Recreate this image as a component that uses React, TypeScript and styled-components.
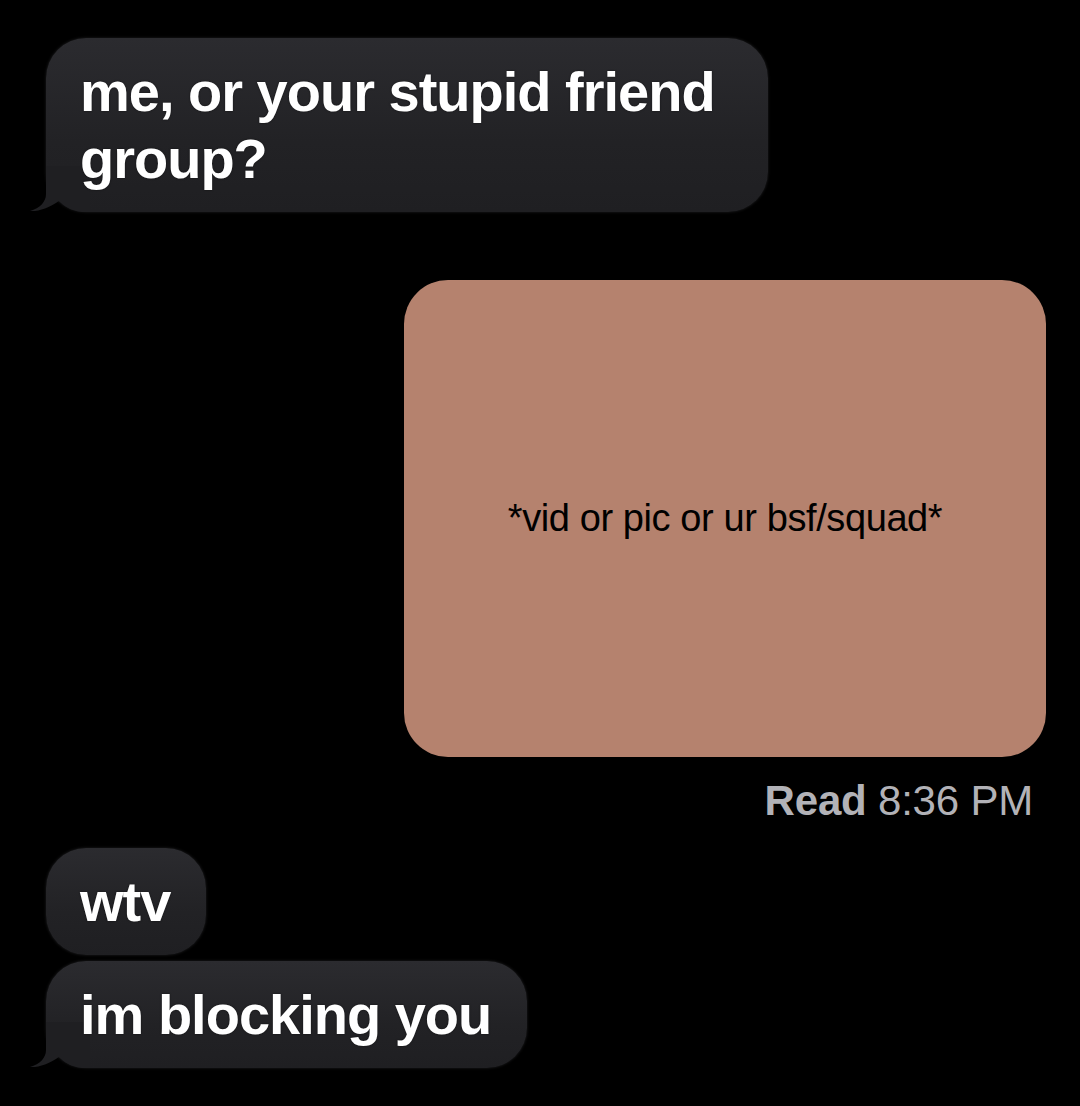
import styled, { createGlobalStyle } from "styled-components";

const GlobalStyle = createGlobalStyle`
  html, body {
    margin: 0;
    padding: 0;
    background: #000;
  }
  body {
    font-family: "Liberation Sans", Arial, sans-serif;
    -webkit-font-smoothing: antialiased;
  }
`;

const Thread = styled.div`
  display: flex;
  flex-direction: column;
  align-items: flex-start;
  width: 1080px;
  min-height: 1106px;
  box-sizing: border-box;
  padding: 38px 34px 0 46px;
  background: #000;
`;

const Bubble = styled.div<{ $gap?: number }>`
  position: relative;
  box-sizing: border-box;
  max-width: 722px;
  margin-top: ${(p) => p.$gap ?? 0}px;
  padding: 20px 36px 20px 34px;
  border-radius: 40px;
  background: linear-gradient(180deg, #2b2b2f 0%, #222225 60%, #1f1f22 100%);
  box-shadow: 0 0 3px rgba(70, 70, 76, 0.45);
  color: #fff;
  font-size: 56px;
  font-weight: 700;
  line-height: 67px;
  letter-spacing: -1px;
  text-shadow: 0 0 2px rgba(0, 0, 0, 0.6);
`;

const BubbleText = styled.span`
  position: relative;
  z-index: 1;
`;

const TailSvg = styled.svg`
  position: absolute;
  left: -16px;
  bottom: 0;
  width: 60px;
  height: 46px;
  overflow: visible;
`;

const Attachment = styled.div`
  align-self: flex-end;
  display: flex;
  align-items: center;
  justify-content: center;
  width: 642px;
  height: 477px;
  margin-top: 68px;
  border-radius: 44px;
  background: #b5826e;
  color: #000;
  font-size: 38px;
  letter-spacing: -0.4px;
`;

const Receipt = styled.div`
  align-self: flex-end;
  margin-top: 20px;
  margin-right: 13px;
  color: #b2b2b7;
  font-size: 42px;
  line-height: 48px;
  letter-spacing: -0.2px;
`;

const ReceiptLabel = styled.span`
  font-weight: 700;
`;

const Tail = () => (
  <TailSvg viewBox="0 0 60 46" aria-hidden="true">
    <path
      d="M16 0 V28 C16 36 10 42 0 45 C9 45.5 19 42 29 35 C34 40 41 45 52 46 H60 V0 Z"
      fill="#1f1f22"
    />
  </TailSvg>
);

export default function App() {
  return (
    <>
      <GlobalStyle />
      <Thread>
        <Bubble>
          <BubbleText>me, or your stupid friend group?</BubbleText>
          <Tail />
        </Bubble>
        <Attachment>*vid or pic or ur bsf/squad*</Attachment>
        <Receipt>
          <ReceiptLabel>Read</ReceiptLabel> 8:36 PM
        </Receipt>
        <Bubble $gap={23}>
          <BubbleText>wtv</BubbleText>
        </Bubble>
        <Bubble $gap={6}>
          <BubbleText>im blocking you</BubbleText>
          <Tail />
        </Bubble>
      </Thread>
    </>
  );
}
